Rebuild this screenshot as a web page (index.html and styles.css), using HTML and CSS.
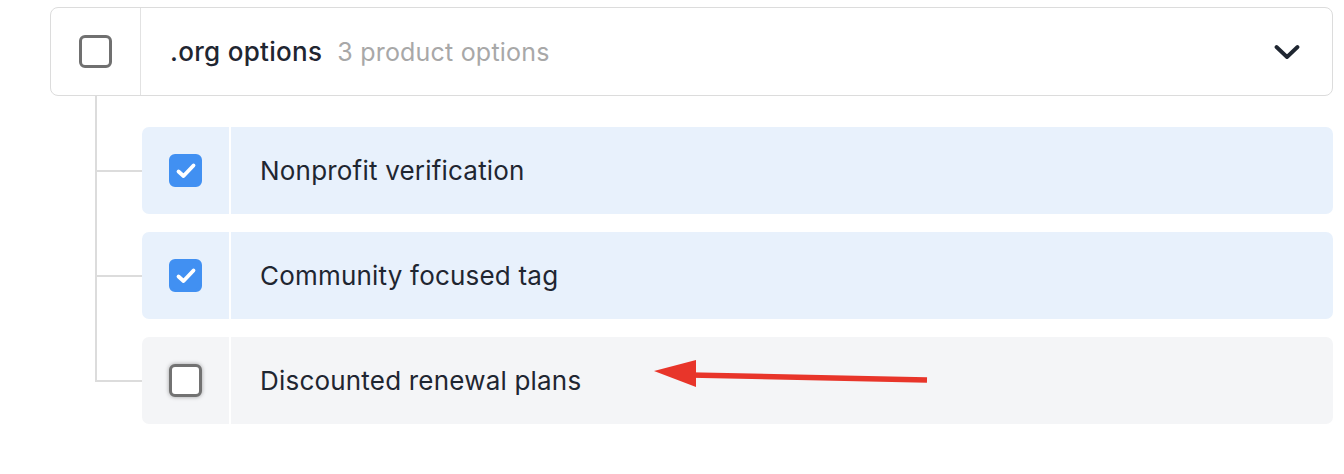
FILE: index.html
```html
<!DOCTYPE html>
<html>
<head>
<meta charset="utf-8">
<link rel="stylesheet" href="styles.css">
</head>
<body>
<div class="group">
  <div class="header">
    <div class="check-cell"><span class="box"></span></div>
    <div class="title"><span class="name">.org options</span><span class="count">3 product options</span></div>
    <div class="chev">
      <svg width="26" height="16" viewBox="0 0 26 16"><path d="M2.5 3 L13 13 L23.5 3" fill="none" stroke="#1f2631" stroke-width="3.8" stroke-linecap="round" stroke-linejoin="round"/></svg>
    </div>
  </div>
  <div class="children">
    <div class="row selected">
      <div class="check-cell"><span class="box checked"><svg width="22" height="18" viewBox="0 0 22 18"><path d="M3.5 9.5 L8.5 14 L18.5 3.5" fill="none" stroke="#fff" stroke-width="3.8" stroke-linecap="round" stroke-linejoin="round"/></svg></span></div>
      <div class="label">Nonprofit verification</div>
    </div>
    <div class="row selected">
      <div class="check-cell"><span class="box checked"><svg width="22" height="18" viewBox="0 0 22 18"><path d="M3.5 9.5 L8.5 14 L18.5 3.5" fill="none" stroke="#fff" stroke-width="3.8" stroke-linecap="round" stroke-linejoin="round"/></svg></span></div>
      <div class="label">Community focused tag</div>
    </div>
    <div class="row plain">
      <div class="check-cell"><span class="box focus"></span></div>
      <div class="label">Discounted renewal plans</div>
    </div>
  </div>
</div>
<svg class="arrow" width="300" height="40" viewBox="0 0 300 40">
  <line x1="40" y1="15" x2="277" y2="20" stroke="#e8352a" stroke-width="5.5"/>
  <polygon points="4,11 46,0 46,27" fill="#e8352a"/>
</svg>
</body>
</html>
```
FILE: styles.css
```css
html, body { margin: 0; padding: 0; background: #fff; }
body { font-family: Inter, "Noto Sans", "Liberation Sans", sans-serif; color: #1f2631; position: relative; width: 1344px; height: 474px; overflow: hidden; }

.group { margin: 7px 0 0 50px; width: 1283px; }

.header {
  display: flex; align-items: stretch; height: 89px; box-sizing: border-box;
  border: 1.5px solid #dcdcdc; border-radius: 8px; background: #fff;
}
.header .check-cell { width: 89px; border-right: 1.5px solid #e2e2e2; display: flex; align-items: center; justify-content: center; }
.title { flex: 1; display: flex; align-items: center; padding-left: 29px; }
.name { font-size: 26px; font-weight: 500; color: #1f2631; letter-spacing: 0.3px; }
.count { font-size: 25px; color: #a8a8a8; margin-left: 15px; letter-spacing: 0.2px; }
.chev { display: flex; align-items: center; padding-right: 32px; }

.box {
  width: 33px; height: 33px; box-sizing: border-box; border: 3px solid #707070; border-radius: 6px;
  display: flex; align-items: center; justify-content: center; background: #fff;
}
.box.checked { background: #4190f2; border-color: #4190f2; }
.box.focus { box-shadow: 0 0 4px rgba(0,0,0,0.35); border-color: #727272; }

.children { position: relative; margin-left: 92px; padding-top: 31px; display: flex; flex-direction: column; gap: 18px; }
.children::before { content: ""; position: absolute; left: -47px; top: 0; bottom: 44px; width: 2px; background: #dcdcdc; }

.row { position: relative; height: 87px; display: flex; align-items: stretch; border-radius: 7px; }
.row::before { content: ""; position: absolute; left: -47px; top: 43px; width: 47px; height: 2px; background: #dcdcdc; }
.row.selected { background: #e8f1fc; }
.row.plain { background: #f4f5f7; }
.row .check-cell { width: 87px; border-right: 2px solid #fff; display: flex; align-items: center; justify-content: center; }
.label { display: flex; align-items: center; padding-left: 29px; font-size: 26px; color: #1f2631; letter-spacing: 0.2px; }

.arrow { position: absolute; left: 650px; top: 360px; }
```
